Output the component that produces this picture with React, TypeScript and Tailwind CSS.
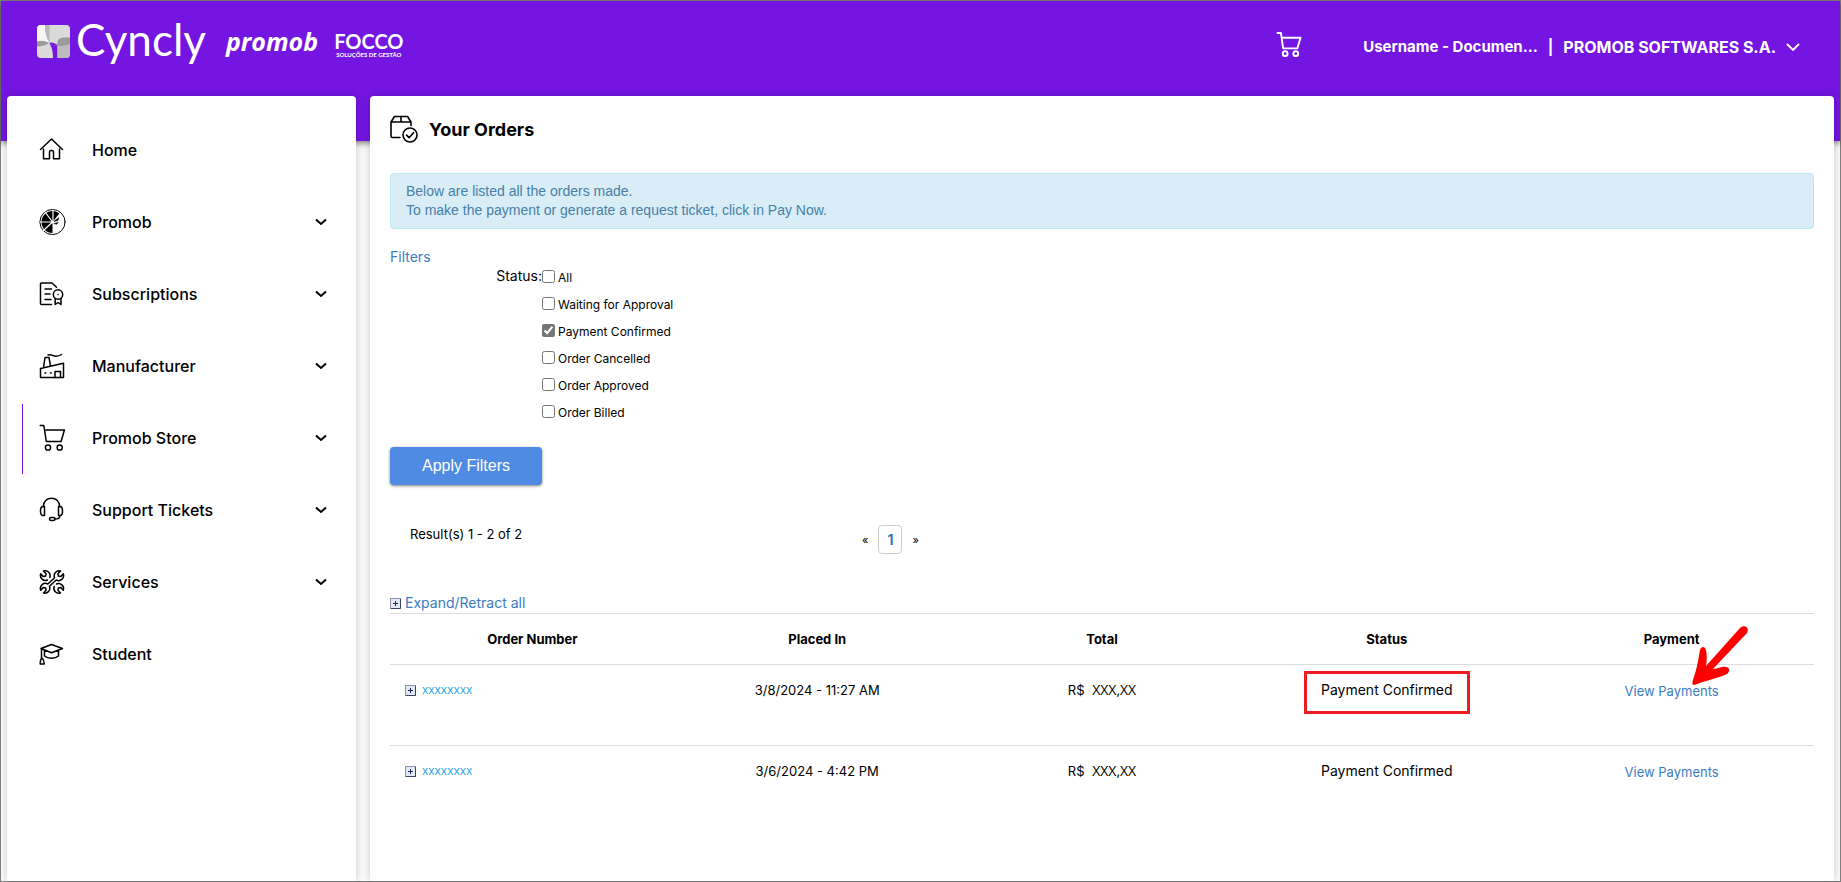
import type { ReactNode } from "react";
import { useState } from "react";

const NAV_ITEMS: { label: string; icon: ReactNode; expandable?: boolean; active?: boolean }[] = [
  { label: "Home", icon: <HomeIcon /> },
  { label: "Promob", icon: <PromobIcon />, expandable: true },
  { label: "Subscriptions", icon: <SubscriptionIcon />, expandable: true },
  { label: "Manufacturer", icon: <FactoryIcon />, expandable: true },
  { label: "Promob Store", icon: <CartIcon />, expandable: true, active: true },
  { label: "Support Tickets", icon: <HeadsetIcon />, expandable: true },
  { label: "Services", icon: <WrenchesIcon />, expandable: true },
  { label: "Student", icon: <StudentIcon /> },
];

const STATUSES = [
  "All",
  "Waiting for Approval",
  "Payment Confirmed",
  "Order Cancelled",
  "Order Approved",
  "Order Billed",
];

const ORDERS = [
  { id: 1, number: "xxxxxxxx", placed: "3/8/2024 - 11:27 AM", total: "XXX,XX", status: "Payment Confirmed", marked: true },
  { id: 2, number: "xxxxxxxx", placed: "3/6/2024 - 4:42 PM", total: "XXX,XX", status: "Payment Confirmed", marked: false },
];

function Svg({ children }: { children: ReactNode }) {
  return (
    <svg
      width="28"
      height="28"
      viewBox="0 0 28 28"
      fill="none"
      stroke="currentColor"
      strokeWidth="1.5"
      strokeLinecap="round"
      strokeLinejoin="round"
      aria-hidden
      className="shrink-0"
    >
      {children}
    </svg>
  );
}

function HomeIcon() {
  return (
    <Svg>
      <path d="M1.5 13.5 12.5 3l11 10.5M4.5 13v9.8h6V16a1.5 1.5 0 0 1 1.5-1.5h1a1.5 1.5 0 0 1 1.5 1.5v6.8h6V13" />
    </Svg>
  );
}

function PromobIcon() {
  return (
    <Svg>
      <circle cx="13.5" cy="14" r="12.6" strokeWidth="1" />
      <path d="M13.5 14v11a11 11 0 1 1 0-22 11 11 0 0 1 6.8 2.4z" fill="currentColor" stroke="none" />
      <path d="M14 14V2M13.5 14 6 4M13.5 14H1.5M13.5 14 4.5 22.5" stroke="#fff" strokeWidth="1.2" />
      <path d="M14.5 13.5 20 9.5l-1 3zM15 15.2l4.5-.7-2 1.8z" fill="currentColor" strokeWidth="0.4" />
      <circle cx="13.5" cy="14.2" r="1.4" fill="#fff" stroke="none" />
    </Svg>
  );
}

function SubscriptionIcon() {
  return (
    <Svg>
      <path d="M12.5 24.5h-10a1 1 0 0 1-1-1V4a1 1 0 0 1 1-1H13l4.5 4.2M6 9h6.5M6 14h5M6 19.5h6" />
      <circle cx="19" cy="14.5" r="4.7" />
      <path d="M19 14.4v.2M16.2 18.5v6l2.8-2 3 2v-6" />
    </Svg>
  );
}

function FactoryIcon() {
  return (
    <Svg>
      <path d="M1.5 25.5v-9l23-5.2v14.2zM4.5 15.5 6 5.5h4l1.5 8.5M9 3c3-1.5 5 1.5 8 1.2 2.5 0 4-.7 5.5-1.7" />
      <path d="M16 25.5v-6h5.5v6M6 21h.8M11.5 21h.8" />
    </Svg>
  );
}

function CartIcon() {
  return (
    <Svg>
      <path d="M1.2 1.5h3.6l2.5 16h14.8L25.400 6H5.5" />
      <circle cx="9" cy="23.5" r="2.6" />
      <circle cx="20.7" cy="23.5" r="2.6" />
    </Svg>
  );
}

function HeadsetIcon() {
  return (
    <Svg>
      <path d="M4.3 10.5c0-5 3.700-8.300 8.200-8.300s8.200 3.300 8.200 8.300M20.700 20.500c0 2-1.700 2.500-4.700 2.500" />
      <path d="M4 10.500h1.500v9H4c-1.500 0-2.500-2-2.500-4.500s1-4.500 2.500-4.500zM21 10.500h-1.500v9H21c1.500 0 2.500-2 2.500-4.500s-1-4.500-2.500-4.500z" />
      <rect x="10.5" y="21.5" width="5.5" height="3" rx="1.5" />
    </Svg>
  );
}

function WrenchesIcon() {
  return (
    <Svg>
      <path d="M8.8 16l6.800-6.200A5 5 0 0 1 21.500 3l-2.600 2.800.5 2.300 2.200.5 2.700-2.700A5 5 0 0 1 17.200 12l-6.800 6.200A5 5 0 0 1 4.500 25l2.600-2.800-.5-2.300-2.200-.5-2.700 2.700A5 5 0 0 1 8.800 16z" />
      <path d="M10.800 9.500A5 5 0 0 0 4.500 3l2.600 2.800-.5 2.300-2.200.5-2.700-2.700A5 5 0 0 0 8.500 12" />
      <path d="M15.200 18.500A5 5 0 0 0 21.500 25l-2.600-2.800.5-2.300 2.200-.5 2.700 2.700A5 5 0 0 0 17.500 16" />
    </Svg>
  );
}

function StudentIcon() {
  return (
    <Svg>
      <path d="M2 8.500l10.500-4 11 4-11 4.300zM5.500 10.500V16c3.500 3 10.500 3 14 0v-5.500M2.500 9v9.500M2.500 18.500c-1 1-1.300 3-1.300 5.500h4c0-2.500-.7-4.500-1.700-5.500z" />
    </Svg>
  );
}

function OrdersIcon() {
  return (
    <svg width="29" height="30" viewBox="0 0 29 30" fill="none" stroke="currentColor" strokeWidth="1.6" strokeLinecap="round" strokeLinejoin="round" aria-hidden>
      <path d="M10 22.500H2.500A1.500 1.500 0 0 1 1 21V7l3.500-5.500h13L21 7v3.500M1 7h20M11 1.500V7" />
      <circle cx="20" cy="20" r="7" />
      <path d="m16.500 20.200 2.600 2.500 4.400-5" />
    </svg>
  );
}

function Chevron() {
  return (
    <svg width="12" height="8" viewBox="0 0 12 8" fill="none" stroke="currentColor" strokeWidth="2" aria-hidden>
      <path d="m1 1.500 5 4.500 5-4.500" />
    </svg>
  );
}

function PlusBox() {
  return (
    <svg width="11" height="11" viewBox="0 0 11 11" aria-hidden className="shrink-0">
      <rect x="0.5" y="0.5" width="10" height="10" fill="#e3e8f4" stroke="#8b95ad" />
      <path d="M10.5 1v9.500H1" stroke="#34426e" fill="none" />
      <path d="M3 5.500h5M5.500 3v5" stroke="#1d2a55" />
    </svg>
  );
}

function CynclyMark() {
  return (
    <svg width="33" height="33" viewBox="0 0 33 33" aria-hidden>
      <rect width="33" height="33" rx="4" fill="#dadada" />
      <path d="M4 0h4c0 7 1 12 4 18L0 16.500V4a4 4 0 0 1 4-4z" fill="#f7f7f7" />
      <path d="M8 0h4.500v17.500C9 12 8 7 8 0z" fill="#b8b8b8" />
      <path d="M0 16.500c4-1.500 8-1 12 1.500-3 2-7 3.500-12 3.500z" fill="#9b9b9b" />
      <path d="M12.500 18c2-1 3.500-.5 8 2v1c-3 0-6-1-8-3z" fill="#7415e2" />
      <path d="M20.500 21c-1-5 1-8.500 6-8.500H33v7c-4 1.500-8 1.500-12.500 1.500z" fill="#9b9b9b" />
      <path d="M12 18c3 2 6 3 8.500 3v12H16c0-7-1-11-4-15z" fill="#7415e2" />
      <path d="M20.500 21c4.500 0 8.500 0 12.500-1.500V29a4 4 0 0 1-4 4h-8.500z" fill="#bcbcbc" />
    </svg>
  );
}

function Header() {
  return (
    <header className="h-[140px] bg-[#7415e2] pt-5 pr-10 pl-9 text-white shadow-[0_2px_6px_rgba(0,0,0,0.5)]">
      <div className="flex items-start justify-between">
        <div className="flex items-start">
          <div className="flex items-start gap-1.5 pt-1">
            <CynclyMark />
            <span className="-mt-1 font-[Lato] text-[44px] leading-9">Cyncly</span>
          </div>
          <span className="ml-5 font-['Open_Sans'] text-[25px] leading-10 font-bold italic">promob</span>
          <div className="ml-4 flex flex-col pt-2.5 text-center">
            <span className="font-[Lato] text-xl leading-5 font-bold">FOCCO</span>
            <span className="font-[Lato] text-[6px] leading-2 font-bold">SOLUÇÕES DE GESTÃO</span>
          </div>
        </div>
        <div className="flex items-start pt-2.5">
          <button type="button" aria-label="Cart" className="mr-[60px]">
            <svg width="27" height="27" viewBox="0 0 28 28" fill="none" stroke="currentColor" strokeWidth="2" strokeLinecap="round" strokeLinejoin="round" aria-hidden>
              <path d="M1.5 2h3.600l2.300 16h14.700L25.500 7H5.800" />
              <circle cx="9.500" cy="23.500" r="2.500" />
              <circle cx="20.500" cy="23.500" r="2.500" />
            </svg>
          </button>
          <button type="button" className="flex items-center pt-1 text-[15px] leading-6 font-bold">
            <span>Username - Documen...</span>
            <span className="mx-2.5">|</span>
            <span className="text-base">PROMOB SOFTWARES S.A.</span>
            <svg width="14" height="9" viewBox="0 0 14 9" fill="none" stroke="currentColor" strokeWidth="1.8" className="ml-2.5" aria-hidden>
              <path d="m1 1 6 6 6-6" />
            </svg>
          </button>
        </div>
      </div>
    </header>
  );
}

function Sidebar() {
  return (
    <nav className="w-[349px] shrink-0 rounded-t bg-white px-[15px] pt-5 shadow-[0_0_8px_rgba(0,0,0,0.2)]">
      <ul>
        {NAV_ITEMS.map((item) => (
          <li key={item.label} className="mb-0.5">
            <a
              href="#"
              className={`flex h-[70px] items-center border-l pr-3.5 pb-0.5 pl-4 text-base font-medium text-black ${
                item.active ? "border-[#7415e2]" : "border-transparent"
              }`}
            >
              {item.icon}
              <span className="ml-[25px] flex-1">{item.label}</span>
              {item.expandable && <Chevron />}
            </a>
          </li>
        ))}
      </ul>
    </nav>
  );
}

function StatusFilter() {
  const [checked, setChecked] = useState(["Payment Confirmed"]);

  const toggle = (status: string) =>
    setChecked((prev) => (prev.includes(status) ? prev.filter((s) => s !== status) : [...prev, status]));

  return (
    <div role="group" aria-labelledby="status-label" className="flex">
      <span id="status-label" className="w-[152px] text-right leading-[18px]">
        Status:
      </span>
      <div>
        {STATUSES.map((status) => (
          <label key={status} className="flex h-[27px] items-start text-xs">
            <input
              type="checkbox"
              checked={checked.includes(status)}
              onChange={() => toggle(status)}
              className="mt-[3px] size-[13px] accent-[#757575]"
            />
            <span className="ml-[3px] pt-[3px] leading-4">{status}</span>
          </label>
        ))}
      </div>
    </div>
  );
}

function Pagination() {
  return (
    <div className="mt-10 flex h-[68px] items-start text-[13px] leading-[18px]">
      <span className="w-[472px] pl-5">Result(s) 1 - 2 of 2</span>
      <div className="flex items-center gap-2.5 text-[11px]">
        <span>«</span>
        <button
          type="button"
          className="h-[29px] w-6 rounded border border-[#cccccc] text-sm font-bold text-[#337ab7]"
        >
          1
        </button>
        <span>»</span>
      </div>
    </div>
  );
}

function OrdersTable() {
  return (
    <table className="w-full table-fixed border-t border-[#dddddd] text-center">
      <thead>
        <tr className="h-[51px] text-[13px]">
          <th>Order Number</th>
          <th>Placed In</th>
          <th>Total</th>
          <th>Status</th>
          <th>Payment</th>
        </tr>
      </thead>
      <tbody>
        {ORDERS.map((order) => (
          <tr key={order.id} className="h-[81px] border-t border-[#dddddd] align-top text-[13px] leading-5">
            <td className="pt-[15px]">
              <a href="#" className="flex items-center gap-1.5 pl-[15px] font-['Open_Sans'] text-xs leading-5 text-[#29a5e0]">
                <PlusBox />
                {order.number}
              </a>
            </td>
            <td className="pt-[15px]">{order.placed}</td>
            <td className="pt-[15px]">
              R$ <span className="ml-1 font-['Open_Sans'] text-sm">{order.total}</span>
            </td>
            <td className="relative pt-[15px] text-sm">
              {order.status}
              {order.marked && (
                <span className="absolute top-1.5 left-1/2 h-[43px] w-[166px] -translate-x-1/2 border-3 border-[#ed1c24]" />
              )}
            </td>
            <td className="relative pt-4">
              <a href="#" className="text-[#3a7cc2]">View Payments</a>
              {order.marked && <PointerArrow />}
            </td>
          </tr>
        ))}
      </tbody>
    </table>
  );
}

function PointerArrow() {
  return (
    <svg width="58" height="61" viewBox="0 0 58 61" fill="#ff0000" className="absolute -top-10 left-1/2 ml-5" aria-hidden>
      <path d="M1 60C-1 58 3 50 4 45c2-7 3-15 4-20 1-4 5-4 6 0 1 6 1 11 0 16L48 3c4-4 10-1 7 5L21 44c5 0 9-3 13-2 4 0 4 5 1 7-11 5-23 7-31 10.500z" />
    </svg>
  );
}

export default function App() {
  return (
    <div className="flex min-h-screen flex-col border border-[#808080] bg-[#fafafa] font-[Inter,sans-serif] text-sm text-black">
      <Header />
      <div className="-mt-[45px] flex flex-1 gap-3.5 px-1.5">
        <Sidebar />
        <main className="flex-1 rounded-t bg-white px-5 pt-[19px] shadow-[0_0_8px_rgba(0,0,0,0.2)]">
          <div className="flex items-center gap-2.5">
            <OrdersIcon />
            <h1 className="text-lg font-bold">Your Orders</h1>
          </div>

          <div className="mt-7 rounded border border-[#bce8f1] bg-[#d9edf7] px-[15px] py-2 font-['Liberation_Sans',sans-serif] leading-[19px] text-[#4680a8]">
            Below are listed all the orders made.
            <br />
            To make the payment or generate a request ticket, click in Pay Now.
          </div>

          <a href="#" className="mt-[18px] block w-fit leading-5 text-[#3a7cc2]">
            Filters
          </a>
          <StatusFilter />

          <button
            type="button"
            className="mt-[18px] h-[38px] w-[152px] rounded bg-[#4f8ae3] font-['Liberation_Sans',sans-serif] text-base text-white shadow-[0_1px_3px_rgba(0,0,0,0.5)]"
          >
            Apply Filters
          </button>

          <Pagination />

          <a href="#" className="flex w-fit items-center gap-1 leading-5 text-[#3a7cc2]">
            <PlusBox />
            Expand/Retract all
          </a>
          <OrdersTable />
        </main>
      </div>
    </div>
  );
}
